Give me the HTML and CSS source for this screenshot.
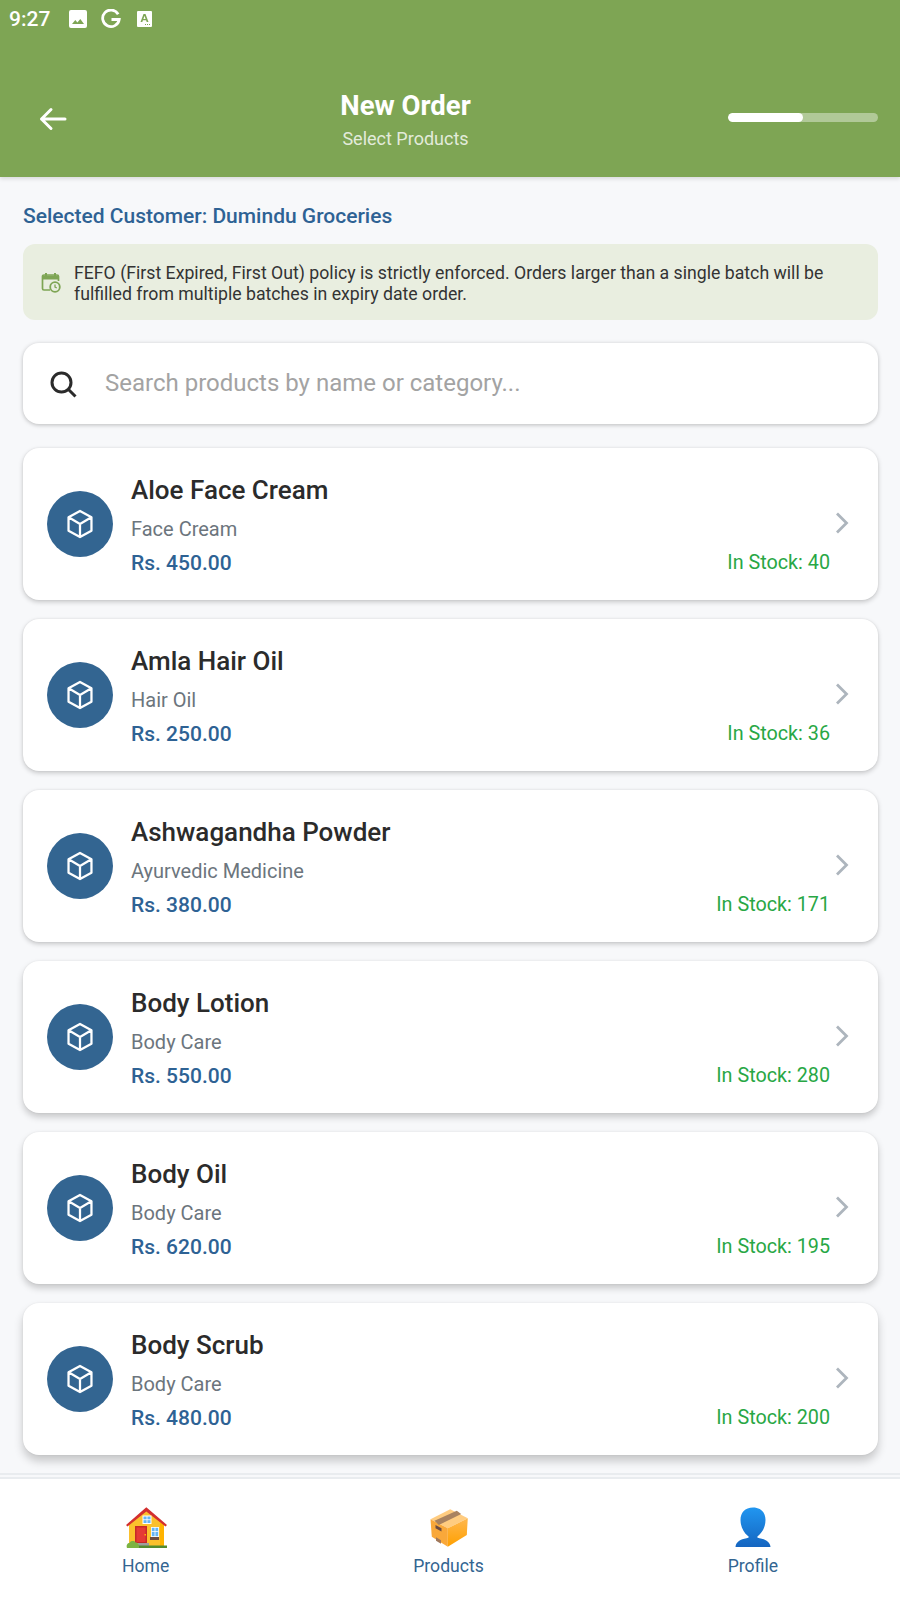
FILE: index.html
```html
<!DOCTYPE html>
<html lang="en">
<head>
  <meta charset="UTF-8" />
  <meta name="viewport" content="width=device-width, initial-scale=1.0" />
  <title>New Order</title>
  <link rel="stylesheet" href="styles.css">
</head>
<body>
  <svg class="icon-defs" width="0" height="0">
    <symbol id="box" viewBox="0 0 24 24">
      <path d="M12 2.200 20.600 7v10L12 21.800 3.400 17V7z M3.800 7.200 12 12l8.200-4.800 M12 12v9.600" fill="none" stroke="currentColor" stroke-width="1.700" stroke-linejoin="round" stroke-linecap="round"/>
    </symbol>
    <symbol id="chevron" viewBox="0 0 24 24">
      <path d="M7 2.500 16.500 12 7 21.500" fill="none" stroke="currentColor" stroke-width="2.800"/>
    </symbol>
  </svg>

  <header class="top-bar">
    <div class="status-bar">
      <span class="status-time">9:27</span>
      <svg class="status-icon" viewBox="0 0 18 18"><path fill-rule="evenodd" d="M2 0h14a2 2 0 0 1 2 2v14a2 2 0 0 1-2 2H2a2 2 0 0 1-2-2V2a2 2 0 0 1 2-2zM3 14h12l-3.700-5-2.900 3.600L6.300 10z" fill="#fff"/></svg>
      <svg class="status-icon status-g" viewBox="0 0 20 20"><path d="M17.200 5.200A8.300 8.300 0 1 0 18.200 10.500H10.500" fill="none" stroke="#fff" stroke-width="2.800"/></svg>
      <svg class="status-icon status-a" viewBox="0 0 15 16"><path fill-rule="evenodd" d="M1 0h13a1 1 0 0 1 1 1v14a1 1 0 0 1-1 1H1a1 1 0 0 1-1-1V1a1 1 0 0 1 1-1zM6.500 3 3.500 11h1.800l.6-1.700h3.200l.6 1.700h1.800L8.500 3zM6.400 7.900l1.100-3.100 1.100 3.100zM8 13h1v1H8zM10 13h1v1h-1zM12 13h1v1h-1z" fill="#fff"/></svg>
    </div>
    <div class="title-row">
      <svg class="back-icon" viewBox="0 0 30 24"><path d="M27 12H3.500M13 2.500 3.500 12l9.500 9.500" fill="none" stroke="#fff" stroke-width="3" stroke-linecap="round" stroke-linejoin="round"/></svg>
      <div class="title-block">
        <h1>New Order</h1>
        <p>Select Products</p>
      </div>
      <div class="progress"><div class="progress-fill"></div></div>
    </div>
  </header>

  <main class="content">
    <h2 class="customer">Selected Customer: Dumindu Groceries</h2>

    <div class="notice">
      <svg class="notice-icon" viewBox="0 0 20 21">
        <path d="M5 1v3M14 1v3" stroke="#7ea554" stroke-width="2" fill="none"/>
        <path d="M9 18H3a1.500 1.500 0 0 1-1.500-1.500V4.500A1.500 1.500 0 0 1 3 3h13a1.500 1.500 0 0 1 1.500 1.500V9" stroke="#7ea554" stroke-width="1.700" fill="none"/>
        <path d="M2 3.500h15v4H2z" fill="#7ea554"/>
        <circle cx="14" cy="15" r="4.800" fill="#e9eee0" stroke="#7ea554" stroke-width="1.800"/>
        <path d="M14 12.500V15l1.800 1" stroke="#7ea554" stroke-width="1.300" fill="none"/>
      </svg>
      <p>FEFO (First Expired, First Out) policy is strictly enforced. Orders larger than a single batch will be fulfilled from multiple batches in expiry date order.</p>
    </div>

    <div class="search">
      <svg class="search-icon" viewBox="0 0 28 28"><circle cx="12.500" cy="12.500" r="9.500" fill="none" stroke="#2b2b2b" stroke-width="3"/><path d="m19.500 19.500 7 7" stroke="#2b2b2b" stroke-width="3"/></svg>
      <span class="search-placeholder">Search products by name or category...</span>
    </div>

    <section class="products">
      <article class="card">
        <div class="card-icon"><svg><use href="#box"/></svg></div>
        <div class="card-info">
          <h3>Aloe Face Cream</h3>
          <div class="category">Face Cream</div>
          <div class="card-bottom"><span class="price">Rs. 450.00</span><span class="stock">In Stock: 40</span></div>
        </div>
        <svg class="chevron"><use href="#chevron"/></svg>
      </article>
      <article class="card">
        <div class="card-icon"><svg><use href="#box"/></svg></div>
        <div class="card-info">
          <h3>Amla Hair Oil</h3>
          <div class="category">Hair Oil</div>
          <div class="card-bottom"><span class="price">Rs. 250.00</span><span class="stock">In Stock: 36</span></div>
        </div>
        <svg class="chevron"><use href="#chevron"/></svg>
      </article>
      <article class="card">
        <div class="card-icon"><svg><use href="#box"/></svg></div>
        <div class="card-info">
          <h3>Ashwagandha Powder</h3>
          <div class="category">Ayurvedic Medicine</div>
          <div class="card-bottom"><span class="price">Rs. 380.00</span><span class="stock">In Stock: 171</span></div>
        </div>
        <svg class="chevron"><use href="#chevron"/></svg>
      </article>
      <article class="card">
        <div class="card-icon"><svg><use href="#box"/></svg></div>
        <div class="card-info">
          <h3>Body Lotion</h3>
          <div class="category">Body Care</div>
          <div class="card-bottom"><span class="price">Rs. 550.00</span><span class="stock">In Stock: 280</span></div>
        </div>
        <svg class="chevron"><use href="#chevron"/></svg>
      </article>
      <article class="card">
        <div class="card-icon"><svg><use href="#box"/></svg></div>
        <div class="card-info">
          <h3>Body Oil</h3>
          <div class="category">Body Care</div>
          <div class="card-bottom"><span class="price">Rs. 620.00</span><span class="stock">In Stock: 195</span></div>
        </div>
        <svg class="chevron"><use href="#chevron"/></svg>
      </article>
      <article class="card">
        <div class="card-icon"><svg><use href="#box"/></svg></div>
        <div class="card-info">
          <h3>Body Scrub</h3>
          <div class="category">Body Care</div>
          <div class="card-bottom"><span class="price">Rs. 480.00</span><span class="stock">In Stock: 200</span></div>
        </div>
        <svg class="chevron"><use href="#chevron"/></svg>
      </article>
    </section>
  </main>

  <nav class="bottom-nav">
    <div class="nav-item">
      <svg class="nav-icon" viewBox="0 0 42 42">
        <path d="M4 18 21.300 4 39 18v22H4z" fill="#fbc02d"/>
        <path d="M35 17h4v23h-4z" fill="#ffb300"/>
        <path d="M1 19 21.300 1.300 42 19l-1.500 1.500L21.300 5.500 2.500 20.500z" fill="#d32f2f"/>
        <path d="M17.500 9.500h9v8.500h-9z" fill="#fff"/><path d="M18.500 10.500h7v6.500h-7z" fill="#64b5f6"/><path d="M22 10v8M18 13.700h8" stroke="#fff" stroke-width=".8"/>
        <path d="M10 20h12v17H10z" fill="#c62828"/><path d="M11.500 21.500h9V36h-9z" fill="#e53935"/><path d="M19.500 28h1.500v1.500h-1.500z" fill="#ffb300"/>
        <path d="M26 21h8v10h-8z" fill="#fff"/><path d="M26.800 21.800h6.400v8.400h-6.400z" fill="#64b5f6"/><path d="M30 21v10M26.500 25.500h7" stroke="#fff" stroke-width=".8"/>
        <path d="M25 31h9v3h-9z" fill="#6d4c41"/>
        <path d="M13 37h11v3H13z" fill="#9e9e9e"/>
        <path d="M2 39.500h40V42H2z" fill="#558b2f"/>
        <path d="M2 42c-1-3 .5-5 2.500-5 1-2.500 5-2.500 6-.5 2.500 0 4 2.500 3.500 5.500z" fill="#7cb342"/>
      </svg>
      <span>Home</span>
    </div>
    <div class="nav-item">
      <svg class="nav-icon" viewBox="0 0 42 42">
        <defs><linearGradient id="box-side" x1="0" y1="0" x2="0" y2="1"><stop offset="0" stop-color="#ffb74d"/><stop offset="1" stop-color="#ffa000"/></linearGradient></defs>
        <path d="M2.500 13.300 22.200 3.300 39.800 12.300 19.800 22.300z" fill="#ffcc80"/>
        <path d="M2.500 13.300 19.800 22.300 19.800 40.700 3.800 30.700z" fill="#f9a83a"/>
        <path d="M19.800 22.300 39.800 12.300 38.800 29 19.800 40.700z" fill="url(#box-side)"/>
        <path d="M6.500 14.700 28.800 4.700 33.200 8 10.800 19z" fill="#a9825f"/>
        <path d="M7.500 19l6 3.200v3.300l-6-3.200z" fill="#6d4c41"/>
        <path d="M8 31.300l5 2.900v3.500l-5-2.900z" fill="#a1785a"/>
      </svg>
      <span>Products</span>
    </div>
    <div class="nav-item">
      <svg class="nav-icon" viewBox="0 0 42 42">
        <defs><linearGradient id="person" x1="0" y1="0" x2="0" y2="1"><stop offset="0" stop-color="#2196f0"/><stop offset="1" stop-color="#1565c0"/></linearGradient></defs>
        <path d="M21 1.500c8 0 12.500 5 12.500 12.500 0 6.500-3 12.500-7.500 16-1.500 1.200-.5 2 1.500 2.300 6 .9 10.500 3.500 11 8.700H3.500c.5-5.200 5-7.800 11-8.700 2-.3 3-1.100 1.500-2.300-4.500-3.500-7.500-9.500-7.500-16C8.500 6.500 13 1.500 21 1.500z" fill="url(#person)"/>
      </svg>
      <span>Profile</span>
    </div>
  </nav>
</body>
</html>
```

FILE: styles.css
```css
* {
  box-sizing: border-box;
  margin: 0;
  padding: 0;
}

body {
  font-family: Roboto, sans-serif;
  background: #f7f8fa;
  display: flex;
  flex-direction: column;
  height: 100vh;
  overflow: hidden;
}

.icon-defs {
  position: absolute;
}

.top-bar {
  height: 177px;
  flex-shrink: 0;
  background: #7ea554;
  box-shadow: 0 2px 4px rgba(0, 0, 0, 0.12);
  color: #fff;
  z-index: 2;
}

.status-bar {
  display: flex;
  align-items: center;
  height: 38px;
  padding-left: 9px;
}

.status-time {
  font-size: 21px;
  font-weight: 500;
  margin-right: 19px;
}

.status-icon {
  width: 18px;
  height: 18px;
  margin-right: 14px;
}

.status-g {
  width: 20px;
  height: 20px;
  margin-right: 16px;
}

.status-a {
  width: 15px;
  height: 16px;
}

.title-row {
  display: flex;
  align-items: center;
  justify-content: space-between;
  padding: 51px 22px 0 38px;
}

.back-icon {
  width: 30px;
  height: 24px;
  flex-shrink: 0;
}

.title-block {
  text-align: center;
  margin-left: 15px;
}

.title-block h1 {
  font-size: 27.500px;
  font-weight: 700;
  line-height: 31px;
  padding-top: 1px;
}

.title-block p {
  font-size: 18px;
  color: rgba(255, 255, 255, 0.8);
  line-height: 20px;
  margin-top: 8px;
}

.progress {
  width: 150px;
  height: 9px;
  margin-bottom: 3px;
  border-radius: 5px;
  background: rgba(255, 255, 255, 0.4);
  overflow: hidden;
}

.progress-fill {
  width: 50%;
  height: 100%;
  border-radius: 5px;
  background: #fff;
}

.content {
  flex: 1;
  min-height: 0;
  overflow: hidden;
  padding: 27px 22px 0 23px;
}

.customer {
  font-size: 21px;
  font-weight: 500;
  line-height: 24px;
  color: #2e6294;
}

.notice {
  display: flex;
  align-items: center;
  gap: 13px;
  height: 76px;
  margin-top: 16px;
  padding: 0 16px 0 18px;
  background: #e9eee0;
  border-radius: 12px;
}

.notice-icon {
  width: 20px;
  height: 21px;
  flex-shrink: 0;
}

.notice p {
  font-size: 17.700px;
  line-height: 21px;
  padding-top: 4px;
  color: #333;
}

.search {
  display: flex;
  align-items: center;
  height: 81px;
  margin-top: 23px;
  padding: 0 26px;
  background: #fff;
  border-radius: 16px;
  box-shadow: 0 1px 4px rgba(0, 0, 0, 0.25);
}

.search-icon {
  width: 28px;
  height: 28px;
  flex-shrink: 0;
}

.search-placeholder {
  margin: 0 0 2px 28px;
  font-size: 24px;
  color: #a3a3a3;
}

.products {
  margin-top: 24px;
}

.card {
  display: flex;
  align-items: center;
  height: 152px;
  margin-bottom: 19px;
  padding: 0 24px;
  background: #fff;
  border-radius: 16px;
  box-shadow: 0 2px 5px rgba(0, 0, 0, 0.2), 0 0 2px rgba(0, 0, 0, 0.08);
}

/* shadow gets longer towards the bottom of the screen */
.card:nth-child(n+4) {
  box-shadow: 0 4px 7px rgba(0, 0, 0, 0.2), 0 0 2px rgba(0, 0, 0, 0.08);
}

.card:last-child {
  box-shadow: 0 6px 10px rgba(0, 0, 0, 0.2), 0 0 2px rgba(0, 0, 0, 0.08);
}

.card-icon {
  display: flex;
  align-items: center;
  justify-content: center;
  width: 66px;
  height: 66px;
  flex-shrink: 0;
  border-radius: 50%;
  background: #336591;
  color: #fff;
}

.card-icon svg {
  width: 32px;
  height: 32px;
}

.card-info {
  flex: 1;
  margin-left: 18px;
  padding-top: 2px;
}

.card-info h3 {
  font-size: 26px;
  font-weight: 500;
  line-height: 30px;
  color: #2b2b2b;
}

.category {
  font-size: 20px;
  line-height: 24px;
  color: #6c757d;
  margin-top: 12px;
}

.card-bottom {
  display: flex;
  justify-content: space-between;
  align-items: center;
  margin-top: 10px;
}

.price {
  font-size: 21px;
  font-weight: 500;
  line-height: 24px;
  color: #2e6294;
}

.stock {
  font-size: 19.750px;
  line-height: 24px;
  color: #28a745;
}

.chevron {
  width: 24px;
  height: 24px;
  flex-shrink: 0;
  margin-bottom: 2px;
  color: #adb5bd;
}

.bottom-nav {
  display: flex;
  justify-content: space-around;
  height: 123px;
  flex-shrink: 0;
  padding-top: 27px;
  background: #fff;
  border-top: 2px solid #e9ecef;
  box-shadow: 0 -2px 0 #f7f8fa, 0 -4px 0 #e9ecef;
  z-index: 2;
}

.nav-item {
  display: flex;
  flex-direction: column;
  align-items: center;
  font-size: 17.600px;
  color: #336591;
}

.nav-icon {
  width: 42px;
  height: 42px;
  margin-bottom: 8px;
}
```
